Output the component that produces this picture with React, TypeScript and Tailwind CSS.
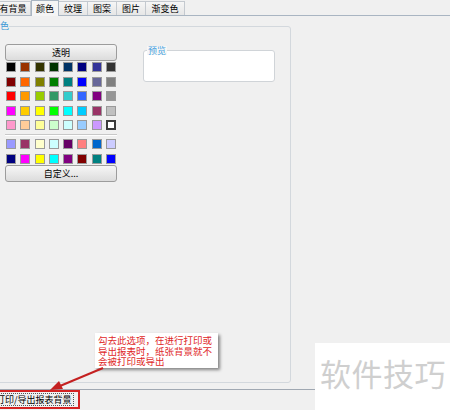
import React from "react";

const font = '"Noto Sans CJK SC", "Microsoft YaHei", sans-serif';

const palette = [
  ["#000000", "#993300", "#333300", "#003300", "#003366", "#000080", "#333399", "#333333"],
  ["#800000", "#FF6600", "#808000", "#008000", "#008080", "#0000FF", "#666699", "#808080"],
  ["#FF0000", "#FF9900", "#99CC00", "#339966", "#33CCCC", "#3366FF", "#800080", "#969696"],
  ["#FF00FF", "#FFCC00", "#FFFF00", "#00FF00", "#00FFFF", "#00CCFF", "#993366", "#C0C0C0"],
  ["#FF99CC", "#FFCC99", "#FFFF99", "#CCFFCC", "#CCFFFF", "#99CCFF", "#CC99FF", "#FFFFFF"],
];

const custom = [
  ["#9999FF", "#993366", "#FFFFCC", "#CCFFFF", "#660066", "#FF8080", "#0066CC", "#CCCCFF"],
  ["#000080", "#FF00FF", "#FFFF00", "#00FFFF", "#800080", "#800000", "#008080", "#0000FF"],
];

const tabs = [
  { label: "有背景", w: "w-[35px]", active: false },
  { label: "颜色", w: "w-[28px]", active: true },
  { label: "纹理", w: "w-[29px]", active: false },
  { label: "图案", w: "w-[29px]", active: false },
  { label: "图片", w: "w-[29px]", active: false },
  { label: "渐变色", w: "w-[39px]", active: false },
];

const Swatches = ({ rows, selected }: { rows: string[][]; selected?: string }) => (
  <div className="grid grid-cols-[repeat(8,10px)] gap-x-[4.3px] gap-y-[4.5px] pl-[1px]">
    {rows.flat().map((c, i) => (
      <div
        key={`${c}-${i}`}
        className={
          c === selected
            ? "h-[10px] w-[10px] border-2 border-[#3a3a3a]"
            : "h-[10px] w-[10px] border border-[#9a9a9a]"
        }
        style={{ backgroundColor: c }}
      />
    ))}
  </div>
);

const PickerButton = ({ label }: { label: string }) => (
  <div className="flex h-[17px] w-[112px] items-center justify-center rounded-[3px] border border-[#9c9c9c] bg-gradient-to-b from-[#f6f6f6] to-[#dcdcdc] text-[9px] leading-none text-black">
    {label}
  </div>
);

export default function App() {
  return (
    <div
      className="relative h-[410px] w-[450px] overflow-hidden bg-[#f0f0f0] text-black"
      style={{ fontFamily: font }}
    >
      {/* tab strip */}
      <div className="flex h-[16px] items-end border-b border-[#a9b5c2] -ml-[4px]">
        {tabs.map((t) => (
          <div
            key={t.label}
            className={
              t.active
                ? `${t.w} flex h-[16px] -mb-[1px] items-center justify-center border border-b-0 border-[#a9b5c2] bg-[#f5f5f5] text-[9px] leading-none`
                : `${t.w} flex h-[14px] items-center justify-center border border-b-0 border-l-0 border-[#c4c9cf] bg-gradient-to-b from-[#f6f6f6] to-[#e6e6e6] text-[9px] leading-none`
            }
          >
            {t.label}
          </div>
        ))}
      </div>

      {/* tab page */}
      <div className="h-[374px] border-b border-[#a0a8b2] pt-[10px]">
        <div className="relative -ml-[10px] h-[357px] w-[301px] rounded-[3px] border border-[#d3d8dd]">
          <span className="absolute left-0 -top-[6px] bg-[#f0f0f0] text-[9px] leading-none text-[#3b99d6]">
            颜色
          </span>
          <div className="flex pl-[14px] pt-[17px]">
            {/* colour picker */}
            <div className="flex w-[112px] flex-col">
              <PickerButton label="透明" />
              <div className="mt-[1px]">
                <Swatches rows={palette} selected="#FFFFFF" />
              </div>
              <div className="mt-[4px] h-[2px] w-[112px] border-t border-b border-t-[#c8c8c8] border-b-white" />
              <div className="mt-[3px]">
                <Swatches rows={custom} />
              </div>
              <div className="mt-[1.5px]">
                <PickerButton label="自定义..." />
              </div>
            </div>

            {/* preview */}
            <div className="relative ml-[26px] mt-[6px] h-[32px] w-[132px] rounded-[3px] border border-[#d0d4d8] bg-white">
              <span className="absolute left-[3px] -top-[5px] bg-[#f7f7f7] px-px text-[9px] leading-none text-[#4aa3e0]">
                预览
              </span>
            </div>
          </div>
        </div>
      </div>

      {/* checkbox label */}
      <div className="flex">
        <div className="-ml-[9px] flex h-[19px] w-[89px] items-center border-2 border-[#d42222] pl-[1px]">
          <span className="border border-dotted border-[#555] px-[1px] text-[9px] leading-[11px]">
            打印/导出报表背景
          </span>
        </div>
      </div>

      {/* callout */}
      <div className="absolute left-[95px] top-[333px] h-[35px] w-[123px] bg-white px-[3px] pt-[2px] text-[9.5px] leading-[10.5px] text-[#e02828] shadow-[2px_2px_3px_rgba(0,0,0,0.45)]">
        <div>勾去此选项，在进行打印或</div>
        <div>导出报表时，纸张背景就不</div>
        <div>会被打印或导出</div>
      </div>

      <svg className="pointer-events-none absolute left-0 top-0" width="450" height="410">
        <line x1="103" y1="368" x2="60" y2="386" stroke="#c42020" strokeWidth="2" />
        <polygon points="50,390 59,381 63,389" fill="#c42020" />
      </svg>

      {/* watermark */}
      <div className="absolute left-[315px] top-[343px] flex h-[67px] w-[135px] items-start bg-white pl-[5px] pt-[12px]">
        <span className="text-[31px] leading-[36px] tracking-[0.5px] text-[#cfcfcf]">软件技巧</span>
      </div>
    </div>
  );
}
